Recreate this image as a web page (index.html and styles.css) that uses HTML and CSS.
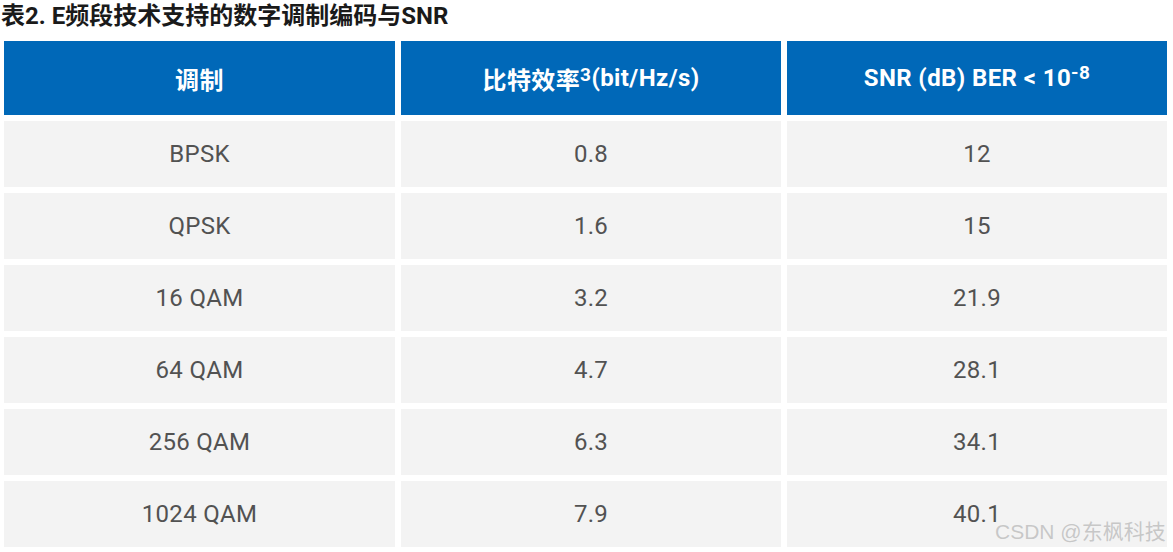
FILE: index.html
```html
<!DOCTYPE html>
<html lang="zh">
<head>
<meta charset="utf-8">
<link rel="stylesheet" href="styles.css">
</head>
<body>
<div class="page">
  <h1 class="title">表2. E频段技术支持的数字调制编码与SNR</h1>
  <div class="table">
    <div class="cell head">调制</div>
    <div class="cell head">比特效率<sup class="sup">3</sup>(bit/Hz/s)</div>
    <div class="cell head">SNR (dB) BER &lt; 10<sup class="sup sup-high">-8</sup></div>

    <div class="cell">BPSK</div><div class="cell">0.8</div><div class="cell">12</div>
    <div class="cell">QPSK</div><div class="cell">1.6</div><div class="cell">15</div>
    <div class="cell">16 QAM</div><div class="cell">3.2</div><div class="cell">21.9</div>
    <div class="cell">64 QAM</div><div class="cell">4.7</div><div class="cell">28.1</div>
    <div class="cell">256 QAM</div><div class="cell">6.3</div><div class="cell">34.1</div>
    <div class="cell">1024 QAM</div><div class="cell">7.9</div><div class="cell">40.1</div>
  </div>
  <div class="watermark">CSDN @东枫科技</div>
</div>
</body>
</html>
```
FILE: styles.css
```css
html, body {
  margin: 0;
  padding: 0;
  background: #ffffff;
}
.page {
  position: relative;
  width: 1173px;
  height: 552px;
  overflow: hidden;
  font-family: Roboto, "Noto Sans CJK SC", sans-serif;
}
.title {
  margin: 0;
  padding: 1px 0 0 1px;
  height: 38px;
  box-sizing: border-box;
  font-size: 24px;
  line-height: 30px;
  font-weight: 700;
  color: #1a1a1a;
}
.table {
  display: grid;
  grid-template-columns: 391px 380px 380px;
  grid-template-rows: 74px repeat(6, 66px);
  gap: 6px;
  margin: 3px 0 0 4px;
}
.cell {
  background: #f3f3f3;
  color: #525252;
  display: flex;
  align-items: center;
  justify-content: center;
  font-size: 24px;
  letter-spacing: 0.3px;
  font-weight: 400;
}
.cell.head {
  background: #0068b8;
  color: #ffffff;
  font-size: 24px;
  letter-spacing: 0.4px;
  font-weight: 700;
}
.sup {
  font-size: 19px;
  line-height: 0;
  position: relative;
  top: -3px;
  vertical-align: super;
}
.sup-high {
  top: -5px;
}
.watermark {
  position: absolute;
  left: 995px;
  top: 517px;
  font-size: 21px;
  line-height: 30px;
  color: rgba(170, 170, 170, 0.6);
  font-family: "Liberation Sans", "Noto Sans CJK SC", sans-serif;
  white-space: nowrap;
}
```
